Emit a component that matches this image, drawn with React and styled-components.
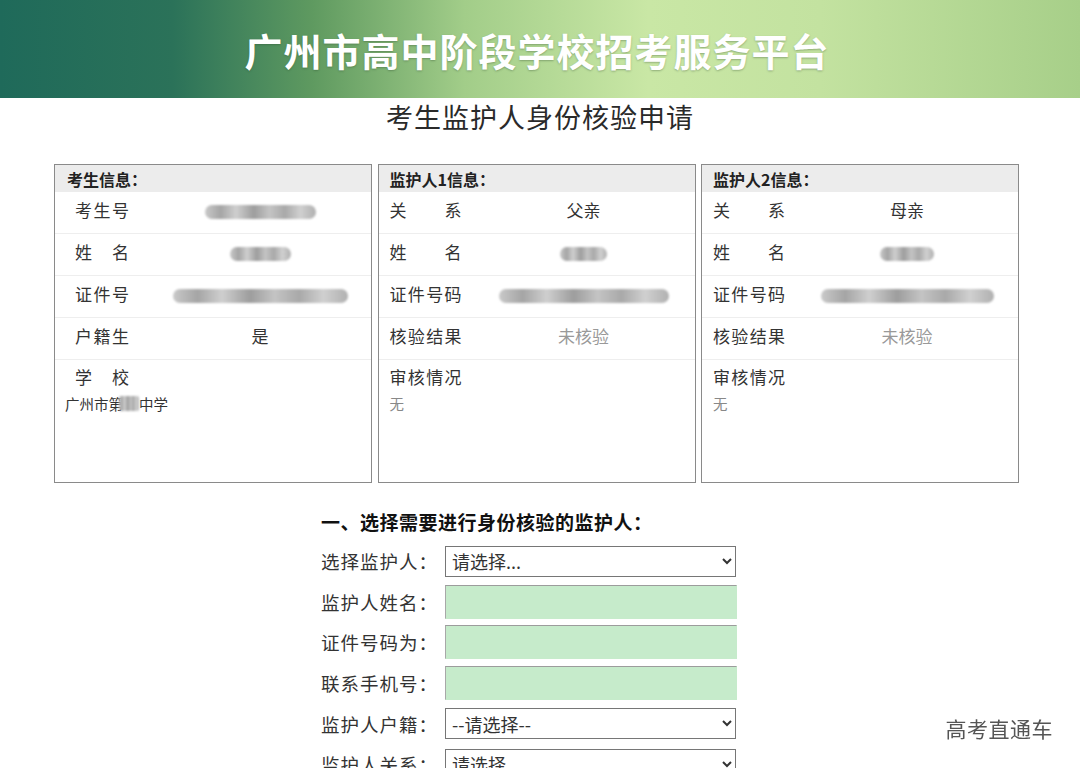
import React from 'react';
import styled, { createGlobalStyle } from 'styled-components';

const GlobalStyle = createGlobalStyle`
  html, body {
    margin: 0;
    padding: 0;
    background: #fff;
    overflow: hidden;
  }
  body {
    font-family: "Noto Sans CJK SC", "Liberation Sans", sans-serif;
    color: #333;
  }
`;

const Banner = styled.header`
  height: 98px;
  display: flex;
  align-items: center;
  justify-content: center;
  background: linear-gradient(90deg, #1f6a5a 0%, #2b7259 16%, #5f9a60 29%, #a2cd89 43%, #c9e7a5 60%, #c3e2a0 76%, #a7cf89 100%);
`;

const BannerTitle = styled.h1`
  margin: 0 0 0 -6px;
  font-size: 38px;
  font-weight: 700;
  letter-spacing: 1px;
  color: #fff;
  text-shadow: 0 1px 2px rgba(40, 70, 40, 0.35);
`;

const PageTitle = styled.h2`
  margin: 0;
  height: 66px;
  padding-top: 1px;
  box-sizing: border-box;
  text-align: center;
  font-size: 27px;
  font-weight: 400;
  line-height: 36px;
  color: #2a2a2a;
  letter-spacing: 1px;
`;

const Panels = styled.div`
  display: grid;
  grid-template-columns: repeat(3, 318px);
  column-gap: 5.5px;
  margin-left: 54px;
`;

const Panel = styled.section`
  height: 319px;
  border: 1px solid #8a8a8a;
  box-sizing: border-box;
  display: flex;
  flex-direction: column;
`;

const PanelHead = styled.div`
  height: 27px;
  background: #ececec;
  display: flex;
  align-items: center;
  padding-left: ${p => p.$indent}px;
  font-size: 16px;
  font-weight: 700;
  color: #222;
`;

const Row = styled.div`
  height: 42px;
  display: grid;
  grid-template-columns: 94px 1fr;
  align-items: center;
  border-bottom: 1px solid #eeeeee;
  box-sizing: border-box;
  padding-bottom: 6px;
`;

const Label = styled.span`
  display: inline-block;
  width: ${p => p.$width}px;
  margin-left: ${p => p.$indent}px;
  font-size: 17px;
  color: #333;
  text-align: justify;
  text-align-last: justify;
  white-space: nowrap;
`;

const Value = styled.span`
  text-align: center;
  font-size: 17px;
  color: ${p => (p.$muted ? '#999' : '#333')};
`;

const Mask = styled.span`
  display: inline-block;
  vertical-align: middle;
  width: ${p => p.$w}px;
  height: ${p => p.$h || 14}px;
  border-radius: 7px;
  background: linear-gradient(90deg, #c9c9c9 0%, #a5a5a5 14%, #cfcfcf 28%, #9d9d9d 44%, #c4c4c4 58%, #a9a9a9 72%, #d0d0d0 86%, #b0b0b0 100%);
  filter: blur(1px);
`;

const LastRow = styled.div`
  flex: 1;
  padding-top: 4px;
`;

const Note = styled.div`
  margin: 4px 0 0 ${p => p.$indent}px;
  font-size: 14.5px;
  color: ${p => (p.$muted ? '#888' : '#333')};
  display: flex;
  align-items: center;
`;

const FormBlock = styled.div`
  width: 438px;
  margin: 26px auto 0;
`;

const FormHeading = styled.h3`
  margin: 0 0 6px;
  font-size: 19px;
  line-height: 26px;
  font-weight: 700;
  color: #111;
  letter-spacing: 0.5px;
`;

const FieldRow = styled.div`
  height: 40.6px;
  display: flex;
  align-items: center;
`;

const FieldLabel = styled.label`
  width: 124px;
  font-size: 18.5px;
  letter-spacing: 1px;
  color: #333;
  white-space: nowrap;
`;

const Select = styled.select`
  width: 291px;
  height: 31px;
  border: 1px solid #767676;
  border-radius: 0;
  background: #fff;
  font-family: "Noto Sans CJK SC", sans-serif;
  font-size: 18px;
  color: #333;
  padding: 0 2px;
  margin: 0;
`;

const TextInput = styled.input`
  width: 292px;
  height: 34px;
  box-sizing: border-box;
  margin: 0;
  background: #c6ebcb;
  border: 1px solid #c6ebcb;
  border-top-color: #9c9c9c;
  border-left-color: #a8a8a8;
  outline: none;
`;

const Watermark = styled.div`
  position: fixed;
  right: 27px;
  bottom: 25px;
  font-size: 21px;
  color: #555;
  letter-spacing: 0.5px;
`;

const panels = [
  {
    title: '考生信息：',
    head: 12,
    indent: 20,
    labelWidth: 54,
    rows: [
      { label: '考生号', mask: 111 },
      { label: '姓名', mask: 61 },
      { label: '证件号', mask: 175 },
      { label: '户籍生', value: '是' },
    ],
    last: '学校',
    school: true,
  },
  {
    title: '监护人1信息：',
    head: 11,
    indent: 11,
    labelWidth: 72,
    rows: [
      { label: '关系', value: '父亲' },
      { label: '姓名', mask: 47 },
      { label: '证件号码', mask: 170 },
      { label: '核验结果', value: '未核验', muted: true },
    ],
    last: '审核情况',
  },
  {
    title: '监护人2信息：',
    head: 11,
    indent: 11,
    labelWidth: 72,
    rows: [
      { label: '关系', value: '母亲' },
      { label: '姓名', mask: 54 },
      { label: '证件号码', mask: 173 },
      { label: '核验结果', value: '未核验', muted: true },
    ],
    last: '审核情况',
  },
];

function InfoPanel({ data }) {
  return (
    <Panel>
      <PanelHead $indent={data.head}>{data.title}</PanelHead>
      {data.rows.map(r => (
        <Row key={r.label}>
          <Label $width={data.labelWidth} $indent={data.indent}>{r.label}</Label>
          <Value $muted={r.muted}>{r.mask ? <Mask $w={r.mask} /> : r.value}</Value>
        </Row>
      ))}
      <LastRow>
        <Label $width={data.labelWidth} $indent={data.indent}>{data.last}</Label>
        {data.school ? (
          <Note $indent={10}>
            广州市第<Mask $w={20} $h={15} style={{ borderRadius: 2, marginLeft: -4 }} />中学
          </Note>
        ) : (
          <Note $indent={data.indent} $muted>无</Note>
        )}
      </LastRow>
    </Panel>
  );
}

export default function App() {
  return (
    <>
      <GlobalStyle />
      <Banner>
        <BannerTitle>广州市高中阶段学校招考服务平台</BannerTitle>
      </Banner>
      <PageTitle>考生监护人身份核验申请</PageTitle>
      <Panels>
        {panels.map(p => (
          <InfoPanel key={p.title} data={p} />
        ))}
      </Panels>
      <FormBlock>
        <FormHeading>一、选择需要进行身份核验的监护人：</FormHeading>
        <FieldRow>
          <FieldLabel>选择监护人：</FieldLabel>
          <Select defaultValue="">
            <option value="">请选择...</option>
          </Select>
        </FieldRow>
        <FieldRow>
          <FieldLabel>监护人姓名：</FieldLabel>
          <TextInput type="text" />
        </FieldRow>
        <FieldRow>
          <FieldLabel>证件号码为：</FieldLabel>
          <TextInput type="text" />
        </FieldRow>
        <FieldRow>
          <FieldLabel>联系手机号：</FieldLabel>
          <TextInput type="text" />
        </FieldRow>
        <FieldRow>
          <FieldLabel>监护人户籍：</FieldLabel>
          <Select defaultValue="">
            <option value="">--请选择--</option>
          </Select>
        </FieldRow>
        <FieldRow>
          <FieldLabel>监护人关系：</FieldLabel>
          <Select defaultValue="">
            <option value="">请选择</option>
          </Select>
        </FieldRow>
      </FormBlock>
      <Watermark>高考直通车</Watermark>
    </>
  );
}
